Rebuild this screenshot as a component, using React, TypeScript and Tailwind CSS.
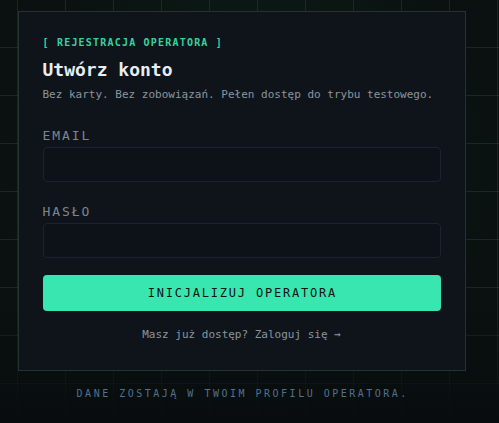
export default function App() {
  return (
    <div className="relative min-h-screen overflow-hidden bg-[#0a1110] font-['DejaVu_Sans_Mono',monospace]">
      {/* tło: siatka + poświata */}
      <div
        className="pointer-events-none absolute inset-0 bg-[radial-gradient(ellipse_at_50%_40%,rgba(20,70,50,0.35),transparent_70%)]"
        aria-hidden
      />
      <div
        className="pointer-events-none absolute inset-0 bg-[linear-gradient(to_right,rgba(60,90,80,0.3)_1px,transparent_1px),linear-gradient(to_bottom,rgba(60,90,80,0.3)_1px,transparent_1px)] bg-[size:48px_48px] bg-[position:17px_-1px]"
        aria-hidden
      />
      <div
        className="pointer-events-none absolute inset-x-0 bottom-0 h-32 bg-gradient-to-t from-[#080c0e] to-transparent"
        aria-hidden
      />

      <div className="relative flex flex-col items-center pr-4 pt-[11px]">
        <section className="w-[448px] border border-[#223330] bg-[#0f141b] px-6 pb-[27px] pt-6">
          <p className="text-[10px] font-semibold leading-[14px] tracking-[0.12em] text-[#34d39e]">
            [ REJESTRACJA OPERATORA ]
          </p>
          <h1 className="mt-1.5 text-lg font-bold leading-7 text-[#e6edf3]">Utwórz konto</h1>
          <p className="mt-[3px] text-[11px] leading-4 text-[#8b949e]">
            Bez karty. Bez zobowiązań. Pełen dostęp do trybu testowego.
          </p>

          <form className="mt-[23px]" onSubmit={(e) => e.preventDefault()}>
            <label className="block">
              <span className="block text-[13px] leading-5 tracking-[0.15em] text-[#7d8590]">EMAIL</span>
              <input
                type="email"
                className="mt-px block h-[35px] w-full rounded border border-[#1c232b] bg-[#0d1218] px-3 text-sm text-[#e6edf3] outline-none"
              />
            </label>
            <label className="mt-5 block">
              <span className="block text-[13px] leading-5 tracking-[0.15em] text-[#7d8590]">HASŁO</span>
              <input
                type="password"
                className="mt-px block h-[35px] w-full rounded border border-[#1c232b] bg-[#0d1218] px-3 text-sm text-[#e6edf3] outline-none"
              />
            </label>
            <button
              type="submit"
              className="mt-[17px] block h-9 w-full rounded bg-[#3ae6b0] pl-[0.15em] text-xs tracking-[0.15em] text-[#0b1410]"
            >
              INICJALIZUJ OPERATORA
            </button>
          </form>

          <p className="mt-4 text-center text-[11px] leading-4 text-[#8b949e]">Masz już dostęp? Zaloguj się →</p>
        </section>

        <p className="mt-[15px] pl-[0.25em] text-[10px] leading-4 tracking-[0.25em] text-[#52718f]">
          DANE ZOSTAJĄ W TWOIM PROFILU OPERATORA.
        </p>
      </div>
    </div>
  )
}
